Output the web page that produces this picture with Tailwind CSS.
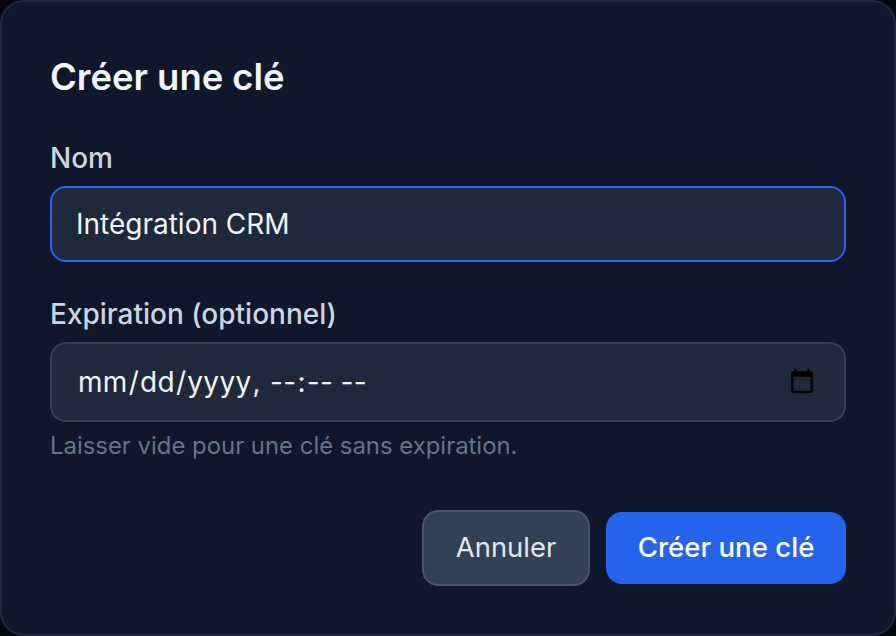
<!DOCTYPE html>
<html lang="fr">
<head>
  <meta charset="UTF-8">
  <meta name="viewport" content="width=device-width, initial-scale=1.0">
  <title>Créer une clé</title>
  <script src="https://cdn.jsdelivr.net/npm/@tailwindcss/browser@4"></script>
</head>
<body class="bg-[#05080f] font-['Inter',sans-serif] overflow-hidden">
  <div class="w-[896px] h-[636px] rounded-[24px] border-2 border-[#1e293b] bg-[#0f172a] px-[48px] pt-[47px]">
    <h2 class="text-[36.4px] leading-[56px] font-semibold text-[#f1f5f9]">Créer une clé</h2>

    <label class="block mt-[33px] text-[28px] leading-[40px] font-medium text-[#cbd5e1]">Nom</label>
    <input type="text" value="Intégration CRM" class="block mt-[8px] w-full h-[76px] px-[24px] rounded-[16px] border-2 border-[#2563eb] bg-[#1e293b] text-[28px] text-[#f1f5f9] outline-none">

    <label class="block mt-[32px] text-[28px] leading-[40px] font-medium text-[#cbd5e1]">Expiration (optionnel)</label>
    <input type="datetime-local" class="block mt-[8px] w-full h-[80px] pl-[25px] pr-[26px] rounded-[16px] border-2 border-[#334155] bg-[#1e293b] text-[28px] tracking-[0.3px] text-[#f1f5f9] outline-none">
    <p class="mt-[8px] text-[23.9px] leading-[32px] text-[#64748b]">Laisser vide pour une clé sans expiration.</p>

    <div class="flex justify-end items-center gap-[16px] mt-[48px]">
      <button class="h-[76px] w-[168px] rounded-[16px] border-2 border-[#475569] bg-[#334155] text-[27.4px] text-[#e2e8f0]">Annuler</button>
      <button class="h-[72px] w-[240px] rounded-[16px] bg-[#2563eb] text-[27.6px] font-medium text-white">Créer une clé</button>
    </div>
  </div>
</body>
</html>
